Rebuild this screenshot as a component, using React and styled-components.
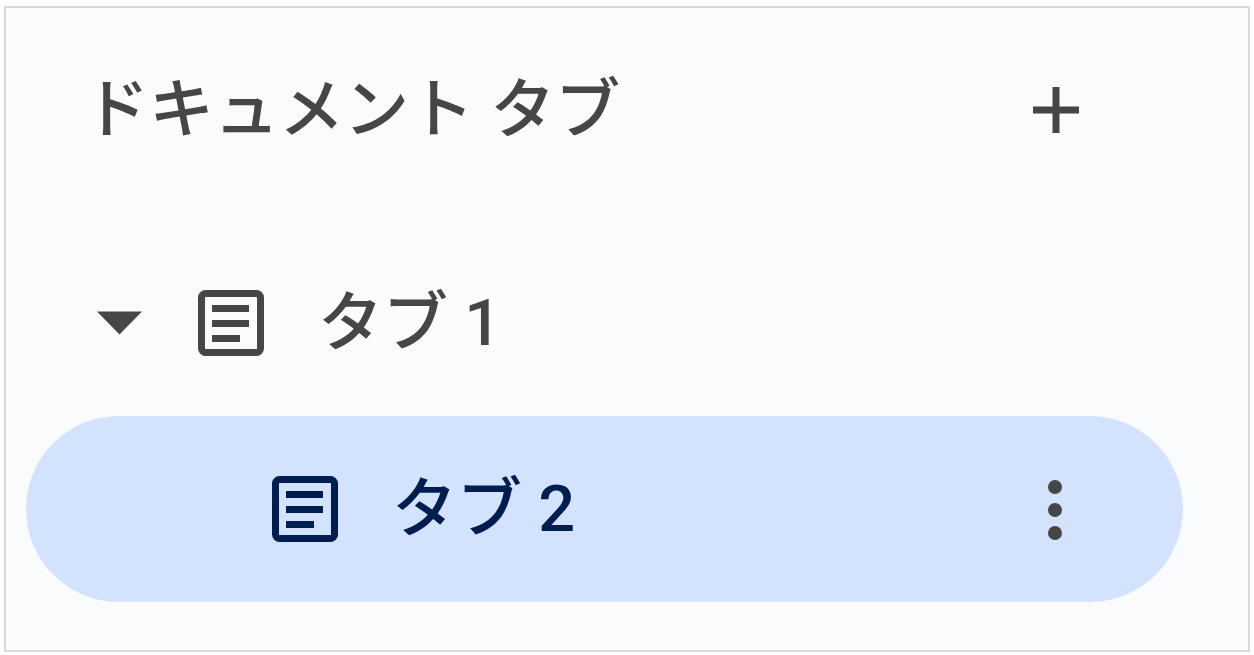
import React from "react";
import styled, { createGlobalStyle } from "styled-components";

const GlobalStyle = createGlobalStyle`
  * { box-sizing: border-box; }
  body {
    margin: 0;
    background: #fff;
    color: #444746;
    font-family: Roboto, "Noto Sans CJK JP", sans-serif;
  }
`;

const Panel = styled.nav`
  margin: 6px 4px 3px;
  padding: 8px 65px 48px 20px;
  border: 2px solid #d9d9d9;
  background: #fafbfd;
`;

const Header = styled.header`
  display: flex;
  align-items: center;
  justify-content: space-between;
  height: 188px;
  margin-bottom: 26px;
  padding: 0 84px 0 58px;
`;

const Title = styled.h1`
  margin: 0;
  font-size: 65px;
  font-weight: 500;
  line-height: 96px;
`;

const IconButton = styled.button`
  display: flex;
  flex: none;
  align-items: center;
  justify-content: center;
  width: 86px;
  height: 86px;
  padding: 0;
  border: 0;
  border-radius: 50%;
  background: none;
  color: #444746;
  cursor: pointer;
`;

const TabList = styled.ul`
  margin: 0;
  padding: 0;
  list-style: none;
`;

const TabRow = styled.li`
  display: flex;
  align-items: center;
  height: 186px;
  padding-right: 84px;
  padding-left: ${(p) => (p.$nested ? 246 : 50)}px;
  border-radius: 93px;
  background: ${(p) => (p.$selected ? "#d3e3fd" : "transparent")};
  color: ${(p) => (p.$selected ? "#001d4f" : "#444746")};
`;

const TabButton = styled.button`
  display: flex;
  flex: 1;
  align-items: center;
  gap: 54px;
  margin-left: ${(p) => (p.$nested ? 0 : 36)}px;
  padding: 0;
  border: 0;
  background: none;
  color: inherit;
  font-family: inherit;
  font-size: 65px;
  font-weight: 500;
  line-height: 96px;
  text-align: left;
  cursor: pointer;
`;

const PlusIcon = () => (
  <svg width="48" height="48" viewBox="0 0 48 48" aria-hidden="true">
    <path d="M24 1v46M1 24h46" stroke="currentColor" strokeWidth="7" />
  </svg>
);

const ArrowIcon = () => (
  <svg width="46" height="24" viewBox="0 0 46 24" aria-hidden="true">
    <path d="M1 0.5h45L23.5 23.5z" fill="currentColor" />
  </svg>
);

const DocumentIcon = () => (
  <svg width="66" height="66" viewBox="0 0 66 66" fill="none" stroke="currentColor" strokeWidth="7" aria-hidden="true">
    <rect x="3.5" y="3.5" width="59" height="59" rx="4" />
    <path d="M14 18.5h37M14 33.5h37M14 48.5h28" />
  </svg>
);

const MoreIcon = () => (
  <svg width="16" height="64" viewBox="0 0 16 64" fill="currentColor" aria-hidden="true">
    <circle cx="7" cy="10" r="7" />
    <circle cx="7" cy="33" r="7" />
    <circle cx="7" cy="56" r="7" />
  </svg>
);

export default function App() {
  return (
    <>
      <GlobalStyle />
      <Panel>
        <Header>
          <Title>ドキュメント タブ</Title>
          <IconButton type="button">
            <PlusIcon />
          </IconButton>
        </Header>
        <TabList>
          <TabRow>
            <IconButton type="button" aria-expanded="true">
              <ArrowIcon />
            </IconButton>
            <TabButton type="button">
              <DocumentIcon />
              タブ 1
            </TabButton>
          </TabRow>
          <TabRow $nested $selected>
            <TabButton type="button" $nested aria-current="page">
              <DocumentIcon />
              タブ 2
            </TabButton>
            <IconButton type="button">
              <MoreIcon />
            </IconButton>
          </TabRow>
        </TabList>
      </Panel>
    </>
  );
}
